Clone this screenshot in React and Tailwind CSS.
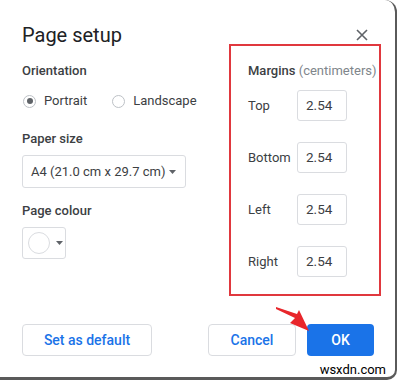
import React from "react";

function Radio({ checked, label }) {
  return (
    <div className="flex items-center gap-[8px]">
      <span className="w-[13px] h-[13px] rounded-full border border-[#bdc1c6] flex items-center justify-center bg-white">
        {checked && <span className="w-[6px] h-[6px] rounded-full bg-[#5f6368]" />}
      </span>
      <span>{label}</span>
    </div>
  );
}

function MarginRow({ label }) {
  return (
    <div className="flex items-center">
      <span className="w-[49px]">{label}</span>
      <div className="w-[50px] h-[31px] border border-[#dadce0] rounded-[3px] flex items-center pl-[8px] text-[13.5px] text-[#3c4043]">
        2.54
      </div>
    </div>
  );
}

export default function App() {
  return (
    <div
      className="relative w-[397px] h-[380px] bg-white overflow-hidden text-[#3c4043] text-[13px]"
      style={{ fontFamily: "Roboto, 'Liberation Sans', sans-serif" }}
    >
      <div className="absolute inset-0 border-r-[2px] border-b-[3px] border-[#5a5a5a] rounded-br-[10px] rounded-tr-[12px] pointer-events-none" />
      <div className="flex flex-col">
        <div className="flex items-start">
          <div className="w-[229px] pl-[22px] pt-[21px] flex flex-col">
            <div className="text-[20px] leading-[28px] text-[#202124]">Page setup</div>
            <div className="mt-[12px] leading-[20px] font-medium text-[#3c4043]">Orientation</div>
            <div className="mt-[10px] h-[20px] flex items-center gap-[25px]">
              <div className="pl-[1px]"><Radio checked label="Portrait" /></div>
              <Radio label="Landscape" />
            </div>
            <div className="mt-[18px] leading-[20px] font-medium">Paper size</div>
            <div className="mt-[6px] w-[164px] h-[33px] border border-[#dadce0] rounded-[3px] flex items-center pl-[8px] pr-[9px] justify-between text-[13px] whitespace-nowrap">
              <span>A4 (21.0 cm x 29.7 cm)</span>
              <svg width="7" height="4" viewBox="0 0 7 4"><path d="M0 0h7L3.5 4z" fill="#5f6368" /></svg>
            </div>
            <div className="mt-[13px] leading-[20px] font-medium">Page colour</div>
            <div className="mt-[6px] w-[44px] h-[32px] border border-[#dadce0] rounded-[3px] flex items-center pl-[5px] gap-[6px]">
              <span className="w-[22px] h-[22px] rounded-full border border-[#dadce0] bg-white" />
              <svg width="7" height="4" viewBox="0 0 7 4"><path d="M0 0h7L3.5 4z" fill="#5f6368" /></svg>
            </div>
          </div>
          <div className="w-[152px] flex flex-col pt-[29px]">
            <div className="flex justify-end pr-[13px] h-[13px]">
              <svg width="12" height="12" viewBox="0 0 12 12">
                <path d="M1 1L11 11M11 1L1 11" stroke="#5f6368" strokeWidth="1.6" />
              </svg>
            </div>
            <div className="mt-[2px] h-[252px] border-2 border-[#e0383e] pl-[17px] pt-[15px] flex flex-col">
              <div className="leading-[20px] whitespace-nowrap">
                <span className="font-medium text-[#3c4043]">Margins</span>{" "}
                <span className="text-[#80868b]">(centimeters)</span>
              </div>
              <div className="mt-[9px] flex flex-col gap-[21px]">
                <MarginRow label="Top" />
                <MarginRow label="Bottom" />
                <MarginRow label="Left" />
                <MarginRow label="Right" />
              </div>
            </div>
          </div>
        </div>
        <div className="mt-[28px] flex items-center pl-[22px]">
          <button className="w-[130px] h-[32px] border border-[#dadce0] rounded-[4px] text-[#1a73e8] font-medium text-[14px]">
            Set as default
          </button>
          <button className="ml-[56px] w-[88px] h-[32px] border border-[#dadce0] rounded-[4px] text-[#1a73e8] font-medium text-[14px]">
            Cancel
          </button>
          <button className="ml-[11px] w-[67px] h-[32px] rounded-[4px] bg-[#1a73e8] text-white font-medium text-[14px]">
            OK
          </button>
        </div>
      </div>
      <svg className="absolute left-0 top-0 pointer-events-none" width="397" height="380">
        <polygon points="276,307 297,314 299,310 309,331 290,323 295,318 276,309" fill="#e8262b" />
      </svg>
      <div className="absolute right-[11px] bottom-[3px] text-[13px] leading-[14px] text-black">wsxdn.com</div>
    </div>
  );
}
